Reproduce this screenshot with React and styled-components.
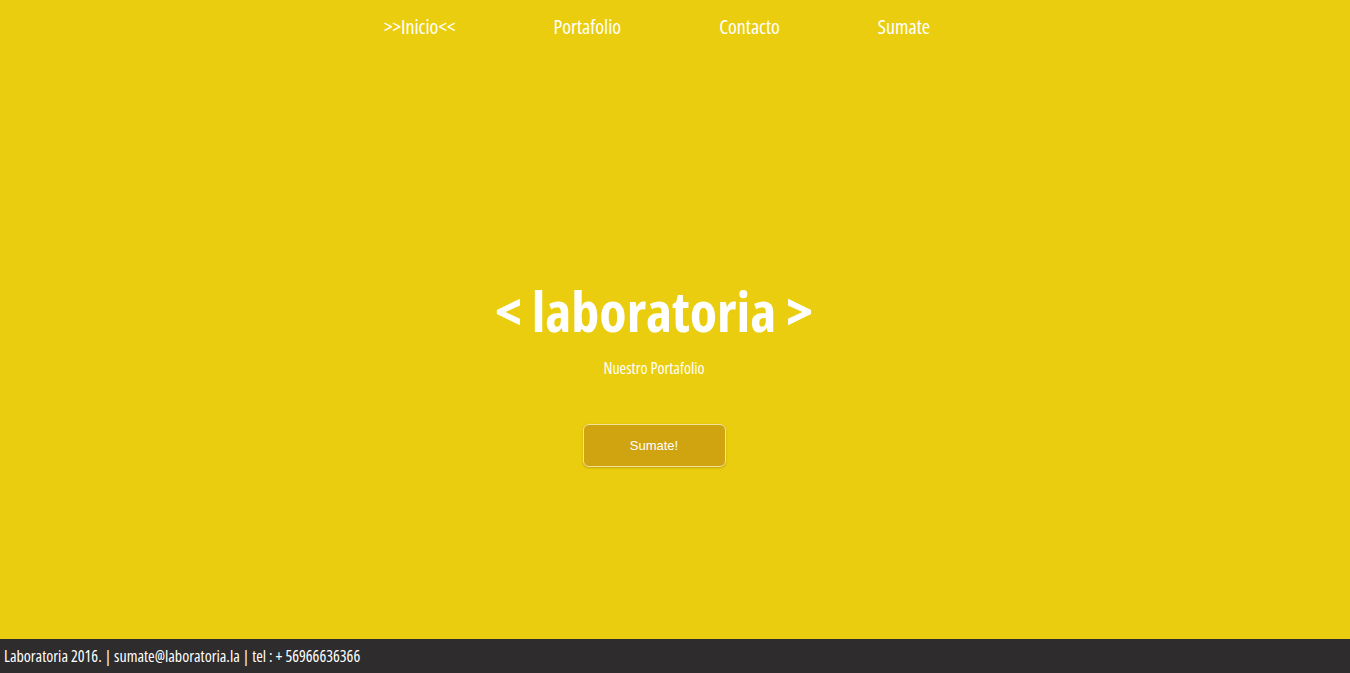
import React from "react";
import styled, { createGlobalStyle } from "styled-components";

const Global = createGlobalStyle`
  html, body {
    margin: 0;
    padding: 0;
    height: 100%;
  }
  body {
    background: #eacd0e;
    font-family: "Open Sans", "DejaVu Sans Condensed", sans-serif;
    font-stretch: condensed;
  }
`;

const Page = styled.div`
  display: flex;
  flex-direction: column;
  height: 673px;
  background: #eacd0e;
`;

const Main = styled.div`
  flex: 1;
  width: 1308px;
  display: flex;
  flex-direction: column;
  align-items: center;
`;

const Nav = styled.ul`
  display: flex;
  justify-content: center;
  gap: 98px;
  list-style: none;
  margin: 0;
  padding: 15px 0 0 6px;
`;

const NavItem = styled.li`
  color: #fff;
  font-size: 20px;
  line-height: 24px;
  cursor: pointer;
`;

const Hero = styled.div`
  display: flex;
  flex-direction: column;
  align-items: center;
  margin-top: 236px;
`;

const Title = styled.h1`
  margin: 0;
  color: #fff;
  font-size: 56px;
  font-weight: 700;
  line-height: 70px;
`;

const Subtitle = styled.p`
  margin: 13px 0 0;
  color: #fff;
  font-size: 16px;
  line-height: 20px;
`;

const Button = styled.button`
  margin-top: 46px;
  width: 143px;
  height: 43px;
  background: #d0a311;
  border: 1px solid #f3e39a;
  border-radius: 6px;
  box-shadow: 0 1px 2px rgba(120, 90, 0, 0.35);
  color: #fff;
  font-family: "Liberation Sans", Arial, sans-serif;
  font-stretch: normal;
  font-size: 13px;
  cursor: pointer;
`;

const Footer = styled.footer`
  height: 34px;
  background: #2e2c2d;
  color: #fff;
  display: flex;
  align-items: center;
  padding-left: 4px;
  font-size: 16px;
`;

const links = [">>Inicio<<", "Portafolio", "Contacto", "Sumate"];

const App = () => {
  return (
    <>
      <Global />
      <Page>
        <Main>
          <Nav>
            {links.map((l, i) => (
              <NavItem key={i}>{l}</NavItem>
            ))}
          </Nav>
          <Hero>
            <Title>&lt; laboratoria &gt;</Title>
            <Subtitle>Nuestro Portafolio</Subtitle>
            <Button>Sumate!</Button>
          </Hero>
        </Main>
        <Footer>Laboratoria 2016. | sumate@laboratoria.la | tel : + 56966636366</Footer>
      </Page>
    </>
  );
};

export default App;
